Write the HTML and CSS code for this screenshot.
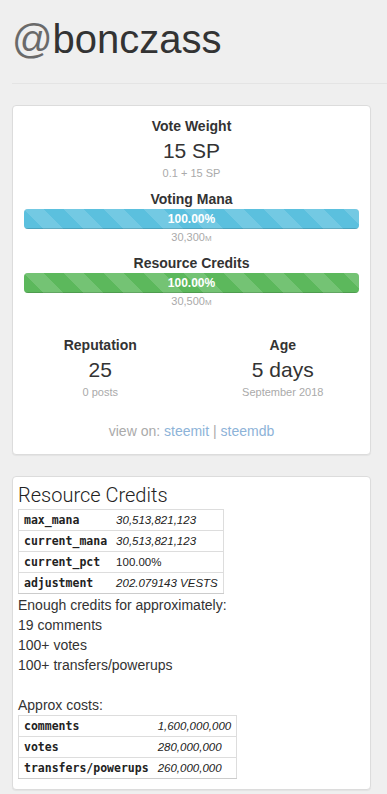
FILE: index.html
```html
<!DOCTYPE html>
<html lang="en">
<head>
    <meta charset="UTF-8">
    <title>@bonczass</title>
    <link rel="stylesheet" href="styles.css">
</head>
<body>
<div class="page">
    <h1 class="username"><span class="at">@</span>bonczass</h1>
    <hr class="rule">

    <div class="panel stats">
        <div class="label">Vote Weight</div>
        <div class="value">15 SP</div>
        <div class="note">0.1 + 15 SP</div>

        <div class="label gap">Voting Mana</div>
        <div class="progress">
            <div class="bar bar-info" style="width: 100%">100.00%</div>
        </div>
        <div class="note barnote">30,300<small>M</small></div>

        <div class="label gap tight">Resource Credits</div>
        <div class="progress">
            <div class="bar bar-success" style="width: 100%">100.00%</div>
        </div>
        <div class="note barnote">30,500<small>M</small></div>

        <div class="row">
            <div class="col">
                <div class="label">Reputation</div>
                <div class="value">25</div>
                <div class="note">0 posts</div>
            </div>
            <div class="col">
                <div class="label">Age</div>
                <div class="value">5 days</div>
                <div class="note">September 2018</div>
            </div>
        </div>

        <div class="links">view on: <a href="#">steemit</a> | <a href="#">steemdb</a></div>
    </div>

    <div class="panel rc">
        <h3 class="rc-title">Resource Credits</h3>
        <table class="kv">
            <tr><th>max_mana</th><td><i>30,513,821,123</i></td></tr>
            <tr><th>current_mana</th><td><i>30,513,821,123</i></td></tr>
            <tr><th>current_pct</th><td>100.00%</td></tr>
            <tr><th>adjustment</th><td><i>202.079143 VESTS</i></td></tr>
        </table>
        <p class="text">Enough credits for approximately:<br>
            19 comments<br>
            100+ votes<br>
            100+ transfers/powerups<br>
            <br>
            Approx costs:</p>
        <table class="kv">
            <tr><th>comments</th><td><i>1,600,000,000</i></td></tr>
            <tr><th>votes</th><td><i>280,000,000</i></td></tr>
            <tr><th>transfers/powerups</th><td><i>260,000,000</i></td></tr>
        </table>
    </div>
</div>
</body>
</html>
```

FILE: styles.css
```css
*{
    padding: 0;
    margin: 0;
    box-sizing: border-box;
}
body{
    background: #efefef;
    color: #333;
    font-family: "Liberation Sans", Arial, sans-serif;
    font-size: 14px;
    line-height: 20px;
}
.page{
    padding-left: 12px;
    padding-bottom: 7px;
}
.username{
    font-size: 40px;
    font-weight: normal;
    line-height: 43px;
    margin-top: 18px;
    color: #333;
}
.username .at{
    color: #6a6a6a;
}
.rule{
    border: 0;
    border-top: 1px solid #e4e4e4;
    margin-top: 22px;
    margin-bottom: 21px;
}
.panel{
    background: #fff;
    border: 1px solid #dcdcdc;
    border-radius: 4px;
    box-shadow: 0 1px 1px rgba(0,0,0,.05);
    margin-right: 16px;
}
.stats{
    padding: 10px 11px 13px;
    text-align: center;
}
.label{
    font-weight: bold;
    line-height: 20px;
}
.label.gap{
    margin-top: 9px;
}
.label.tight{
    margin-top: 8px;
}
.value{
    font-size: 21px;
    line-height: 30px;
}
.note{
    font-size: 11px;
    line-height: 14px;
    color: #aaa;
}
.note small{
    font-size: 8px;
    line-height: 0;
}
.barnote{
    height: 16px;
    line-height: 16px;
}
.progress{
    height: 20px;
    background: #f5f5f5;
    border-radius: 4px;
    overflow: hidden;
    box-shadow: inset 0 1px 2px rgba(0,0,0,.1);
}
.bar{
    height: 20px;
    color: #fff;
    font-size: 12px;
    font-weight: bold;
    line-height: 20px;
    background-image: linear-gradient(45deg, rgba(255,255,255,.15) 25%, transparent 25%, transparent 50%, rgba(255,255,255,.15) 50%, rgba(255,255,255,.15) 75%, transparent 75%, transparent);
    background-size: 40px 40px;
    box-shadow: inset 0 -1px 0 rgba(0,0,0,.15);
}
.bar-info{
    background-color: #5bc0de;
}
.bar-success{
    background-color: #5cb85c;
}
.row{
    display: grid;
    grid-template-columns: 1fr 1fr;
    margin: 26px -15px 0;
}
.links{
    margin-top: 22px;
    color: #aaa;
}
.links a{
    color: #8db3d8;
    text-decoration: none;
}
.rc{
    margin-top: 21px;
    padding: 6px 5px 10px;
}
.rc-title{
    font-family: Roboto, "Liberation Sans", sans-serif;
    font-weight: 300;
    font-size: 20px;
    line-height: 24px;
    margin-bottom: 2px;
    color: #222;
}
.kv{
    border-collapse: collapse;
    border: 1px solid #ddd;
    border-bottom-color: #ccc;
    font-size: 11.5px;
    line-height: 14px;
}
.kv th, .kv td{
    border-top: 1px solid #ddd;
    padding: 3px 5px 3px 4px;
    text-align: left;
    white-space: nowrap;
}
.kv th{
    font-family: "DejaVu Sans Mono", monospace;
    font-weight: bold;
    color: #222;
    padding-left: 5px;
}
.kv td{
    color: #222;
}
.text{
    line-height: 20px;
    margin-top: 1px;
}
```
